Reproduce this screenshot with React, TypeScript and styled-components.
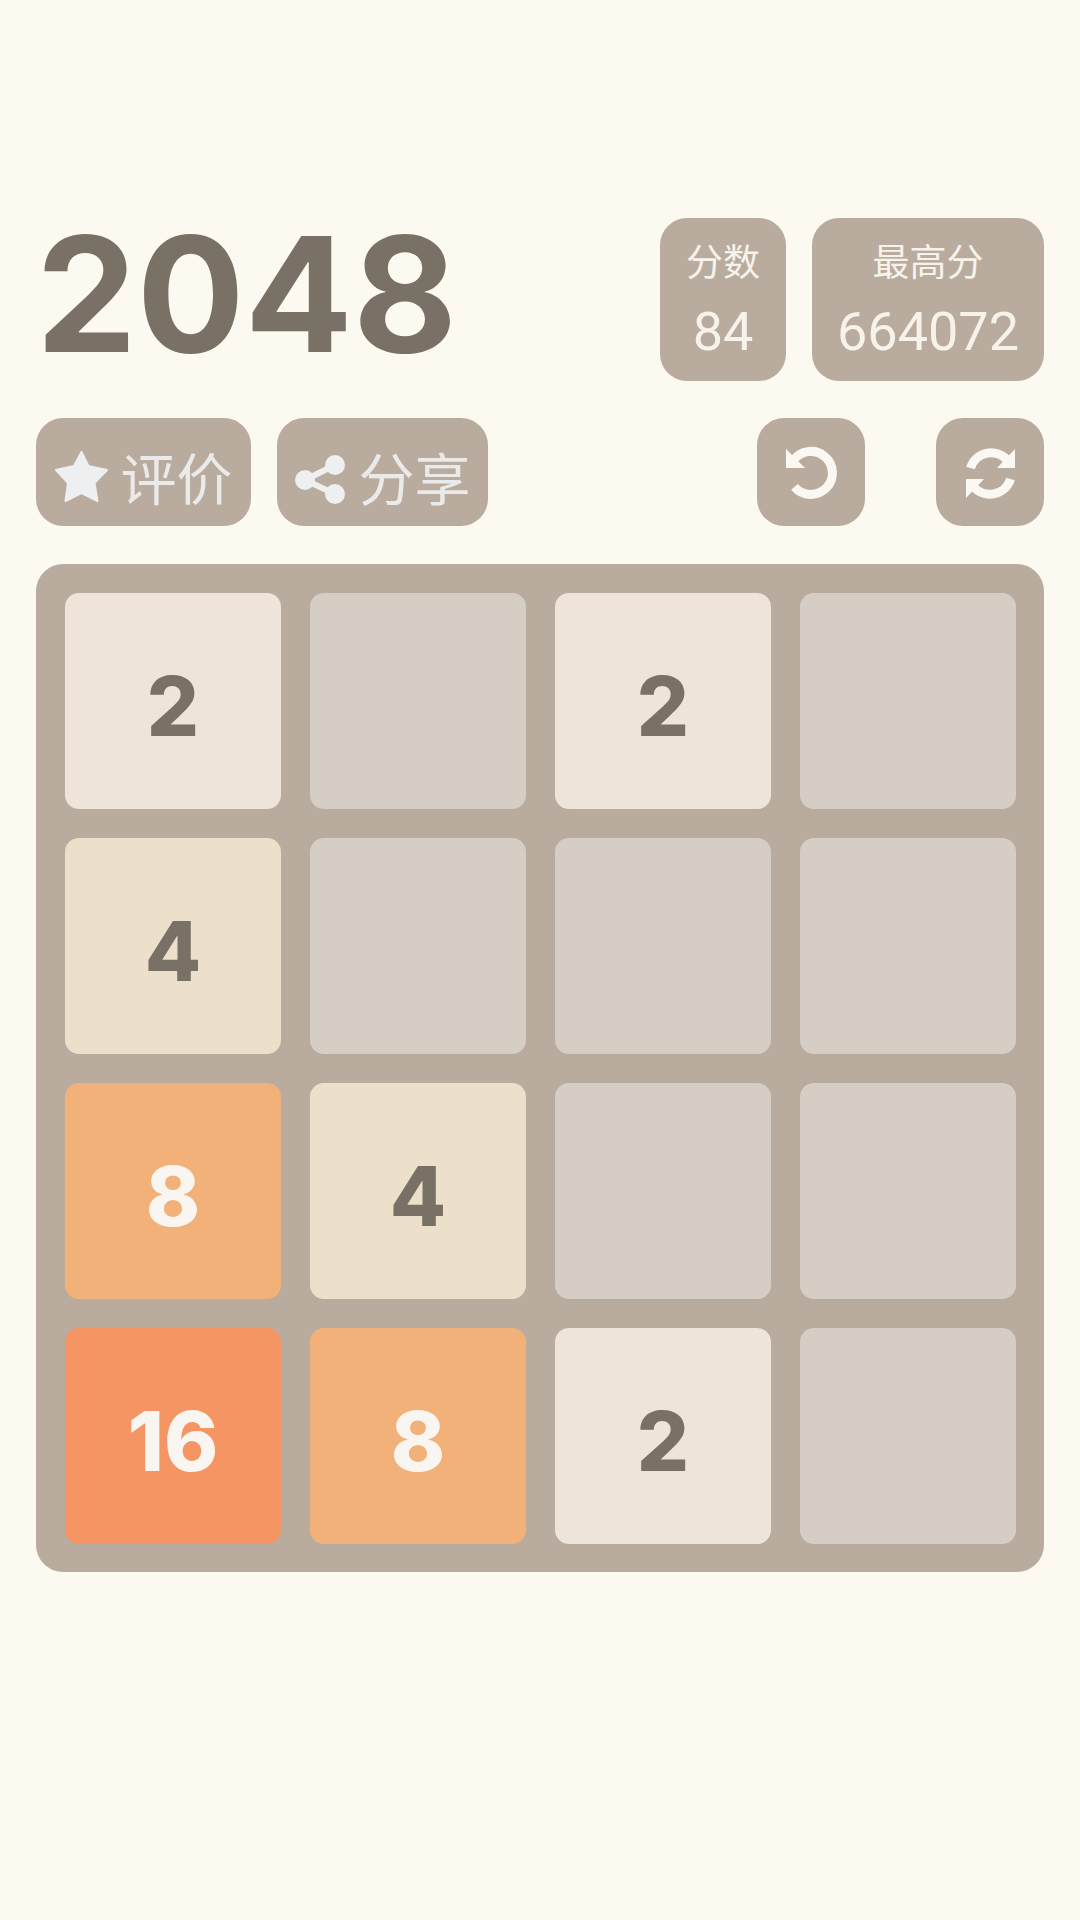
import React from 'react'
import styled, { createGlobalStyle } from 'styled-components'

const GlobalStyle = createGlobalStyle`
  html, body {
    margin: 0;
    padding: 0;
    background: #fcf9f1;
  }
`

const Page = styled.div`
  box-sizing: border-box;
  width: 1080px;
  height: 1920px;
  padding: 218px 36px 0;
  font-family: "Roboto", "Noto Sans CJK SC", sans-serif;
`

const Header = styled.div`
  display: flex;
  align-items: flex-start;
  height: 163px;
`

const Title = styled.h1`
  flex: 1;
  margin: 0;
  font-family: "Inter", sans-serif;
  font-size: 160px;
  font-weight: 700;
  line-height: 153px;
  color: #797165;
`

const ScoreBox = styled.div<{ $width: number }>`
  box-sizing: border-box;
  width: ${p => p.$width}px;
  height: 163px;
  margin-left: 26px;
  padding-top: 20px;
  border-radius: 27px;
  background: #b9ac9e;
  color: #f7f2ea;
  text-align: center;
`

const ScoreLabel = styled.div`
  font-family: "Noto Sans CJK SC", sans-serif;
  font-size: 37px;
  line-height: 44px;
`

const ScoreValue = styled.div`
  margin-top: 25px;
  font-size: 54px;
  line-height: 50px;
`

const Actions = styled.div`
  display: flex;
  align-items: center;
  margin-top: 37px;
`

const Button = styled.button<{ $width: number; $gap?: number }>`
  display: flex;
  align-items: center;
  justify-content: center;
  gap: ${p => p.$gap ?? 0}px;
  box-sizing: border-box;
  width: ${p => p.$width}px;
  height: 108px;
  padding: 0;
  border: 0;
  border-radius: 27px;
  background: #b9ac9e;
  color: #ebeaea;
  font-family: "Noto Sans CJK SC", sans-serif;
  font-size: 56px;
`

const ButtonPart = styled.span<{ $drop: number }>`
  display: flex;
  padding-top: ${p => p.$drop}px;
`

const Spacer = styled.div<{ $width?: number }>`
  flex: ${p => (p.$width ? `0 0 ${p.$width}px` : 1)};
`

const Board = styled.div`
  box-sizing: border-box;
  display: grid;
  grid-template-columns: repeat(4, 216px);
  grid-auto-rows: 216px;
  gap: 29px;
  width: 1008px;
  height: 1008px;
  margin-top: 38px;
  padding: 29px;
  border-radius: 27px;
  background: #b9ac9e;
`

const tileColors: Record<number, { bg: string; fg: string }> = {
  0: { bg: '#d6cdc4', fg: 'transparent' },
  2: { bg: '#eee4da', fg: '#797165' },
  4: { bg: '#ece0ca', fg: '#797165' },
  8: { bg: '#f2b179', fg: '#f9f6f2' },
  16: { bg: '#f59563', fg: '#f9f6f2' },
}

const Tile = styled.div<{ $value: number }>`
  display: flex;
  align-items: center;
  justify-content: center;
  border-radius: 14px;
  padding-top: 10px;
  box-sizing: border-box;
  background: ${p => tileColors[p.$value].bg};
  color: ${p => tileColors[p.$value].fg};
  font-family: "Inter", sans-serif;
  font-size: 82px;
  font-weight: 800;
`

const cells = [
  2, 0, 2, 0,
  4, 0, 0, 0,
  8, 4, 0, 0,
  16, 8, 2, 0,
]

const StarIcon = () => (
  <svg width={54} height={52} viewBox="8 11 54 52">
    <polygon
      points="34.5,12 41.5,26 60,30 47.5,43 50.5,61 34.5,53 18.5,61 21,43 9,30 27,26"
      fill="#eeeff1"
      stroke="#eeeff1"
      strokeWidth={2}
      strokeLinejoin="round"
    />
  </svg>
)

const ShareIcon = () => (
  <svg width={50} height={50} viewBox="8 10 50 50">
    <path d="M48 20 L18 35 L48 49" fill="none" stroke="#eeeff1" strokeWidth={6} />
    <circle cx={48} cy={20} r={10} fill="#eeeff1" />
    <circle cx={18} cy={35} r={10} fill="#eeeff1" />
    <circle cx={48} cy={49} r={10} fill="#eeeff1" />
  </svg>
)

const UndoIcon = () => (
  <svg width={70} height={70} viewBox="1 -3 70 70">
    <path d="M19.5 46.8 A21.5 21.5 0 1 0 18 21" fill="none" stroke="#fbf8f3" strokeWidth={9} />
    <polygon points="11,9 11,28 30,28" fill="#fbf8f3" />
  </svg>
)

const SyncIcon = () => {
  const half = (
    <>
      <path d="M15.5 28 A21.5 21.5 0 0 1 53 21" fill="none" stroke="#fbf8f3" strokeWidth={9} />
      <polygon points="60,9 60,28 42,28" fill="#fbf8f3" />
    </>
  )
  return (
    <svg width={70} height={70} viewBox="0 -3 70 70">
      {half}
      <g transform="rotate(180 35.5 33.5)">{half}</g>
    </svg>
  )
}

const App = () => {
  return (
    <Page>
      <GlobalStyle />
      <Header>
        <Title>2048</Title>
        <ScoreBox $width={126}>
          <ScoreLabel>分数</ScoreLabel>
          <ScoreValue>84</ScoreValue>
        </ScoreBox>
        <ScoreBox $width={232}>
          <ScoreLabel>最高分</ScoreLabel>
          <ScoreValue>664072</ScoreValue>
        </ScoreBox>
      </Header>

      <Actions>
        <Button $width={215} $gap={12}>
          <ButtonPart $drop={9}>
            <StarIcon />
          </ButtonPart>
          <ButtonPart $drop={6}>评价</ButtonPart>
        </Button>
        <Spacer $width={26} />
        <Button $width={211} $gap={14}>
          <ButtonPart $drop={16}>
            <ShareIcon />
          </ButtonPart>
          <ButtonPart $drop={6}>分享</ButtonPart>
        </Button>
        <Spacer />
        <Button $width={108}>
          <UndoIcon />
        </Button>
        <Spacer $width={71} />
        <Button $width={108}>
          <SyncIcon />
        </Button>
      </Actions>

      <Board>
        {cells.map((value, index) => (
          <Tile key={index} $value={value}>
            {value > 0 && value}
          </Tile>
        ))}
      </Board>
    </Page>
  )
}

export default App
